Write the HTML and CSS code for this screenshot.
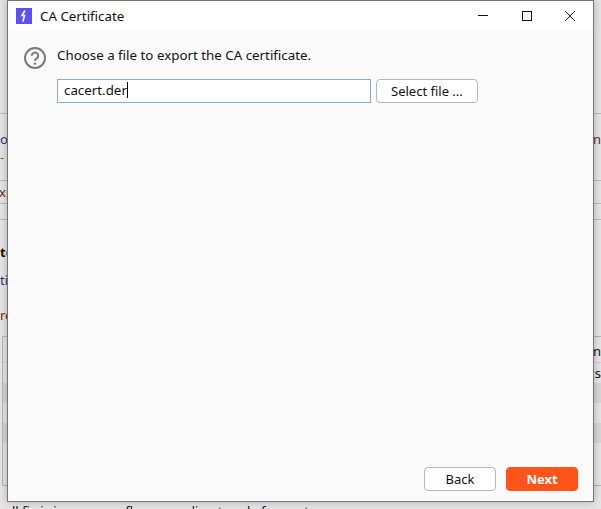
FILE: index.html
```html
<!DOCTYPE html>
<html lang="en">
<head>
<meta charset="UTF-8" />
<title>CA Certificate</title>
<link rel="stylesheet" href="styles.css">
</head>
<body>

<!-- page behind the dialog, only its edges show -->
<div class="behind" aria-hidden="true">
  <div class="row h-113 line"></div>
  <div class="row h-67 line">
    <div class="frag link">o<br><span class="orange">- a</span></div>
    <div class="frag"><span class="brown">on</span></div>
  </div>
  <div class="row h-23 line"><div class="frag brown xp">xp</div></div>
  <div class="row h-16 line"></div>
  <div class="row h-116">
    <div class="frag frag-list">
      <b class="frag-te">te</b>
      <span class="link frag-ti">ti</span>
      <span class="brown frag-re">re</span>
    </div>
  </div>
  <div class="table">
    <div class="table-head"><span></span><span class="frag">n</span></div>
    <div class="table-row"><span></span><span class="frag">cs</span></div>
    <div class="table-row shade"></div>
    <div class="table-row"></div>
    <div class="table-row shade"></div>
  </div>
  <div class="foot">ll fix is in progress flow according to rule for next</div>
</div>

<div class="dialog" role="dialog" aria-label="CA Certificate">
  <div class="titlebar">
    <svg class="app-icon" width="16" height="16" viewBox="0 0 16 16">
      <rect width="16" height="16" fill="#5b50f5"/>
      <path d="M9 2.5 6 7.5h2.5L7 13l-.2-.1" fill="none" stroke="#fff" stroke-width="1.6"/>
    </svg>
    <span class="title">CA Certificate</span>
    <div class="win-buttons">
      <svg width="48" height="30" viewBox="0 0 48 30"><path d="M19 14.5h10" stroke="#111"/></svg>
      <svg width="40" height="30" viewBox="0 0 40 30"><rect x="15.5" y="10.5" width="9" height="9" fill="none" stroke="#111"/></svg>
      <svg width="46" height="30" viewBox="0 0 46 30"><path d="M18 10l10 10M28 10 18 20" stroke="#222" fill="none"/></svg>
    </div>
  </div>

  <div class="content">
    <div class="question">
      <svg class="help-icon" width="22" height="22" viewBox="0 0 22 22">
        <circle cx="11" cy="11" r="10" fill="none" stroke="#7a7a7a" stroke-width="2"/>
        <path d="M7.8 8.8a3.2 3.2 0 1 1 4.9 2.6c-1.1.7-1.7 1.2-1.7 2.5" fill="none" stroke="#7a7a7a" stroke-width="2"/>
        <circle cx="11" cy="16.6" r="1.2" fill="#7a7a7a"/>
      </svg>
      <span class="question-text">Choose a file to export the CA certificate.</span>
    </div>
    <div class="file-row">
      <div class="file-input">cacert.der<i class="caret"></i></div>
      <button class="btn" type="button">Select file ...</button>
    </div>
  </div>

  <div class="actions">
    <button class="btn btn-wide" type="button">Back</button>
    <button class="btn btn-wide btn-next" type="button">Next</button>
  </div>
</div>

</body>
</html>
```

FILE: styles.css
```css
html, body {
  margin: 0;
  height: 100%;
}
body {
  width: 601px;
  height: 509px;
  overflow: hidden;
  position: relative;
  font-family: "Noto Sans", "Open Sans", sans-serif;
  font-size: 13.33px;
  color: #111;
  background: #e4e4e4;
}

/* PAGE BEHIND */
.behind {
  height: 509px;
  overflow: hidden;
  font-size: 13px;
  line-height: 18px;
}
.row {
  display: flex;
  justify-content: space-between;
  box-sizing: border-box;
}
.line { border-bottom: 1px solid #b9b9b9; }
.h-113 { height: 114px; }
.h-67 { height: 67px; padding-top: 16px; }
.h-23 { height: 23px; padding-top: 2px; }
.h-16 { height: 16px; }
.h-116 { height: 116px; padding-top: 23px; }
.xp { margin-left: -1px; }
.frag-list {
  display: flex;
  flex-direction: column;
}
.frag-ti { margin-top: 10px; }
.frag-re { margin-top: 17px; }
.link { color: #123a7a; }
.brown { color: #6b2a10; }
.orange { color: #a05a10; }
.table {
  height: 150px;
  box-sizing: border-box;
  margin-left: 2px;
  border: 1px solid #b4b4b4;
  border-right: none;
}
.table-head {
  display: flex;
  justify-content: space-between;
  height: 26px;
  box-sizing: border-box;
  line-height: 28px;
  border-bottom: 1px solid #cfcfcf;
}
.table-row {
  display: flex;
  justify-content: space-between;
  height: 20px;
  line-height: 20px;
}
.shade { background: #d6d6d6; }
.foot {
  margin: 16px 0 0 12px;
  white-space: nowrap;
}

/* DIALOG */
.dialog {
  position: absolute;
  top: 0;
  left: 7px;
  width: 587px;
  height: 502px;
  box-sizing: border-box;
  border: 1px solid #767676;
  display: flex;
  flex-direction: column;
  background: #fafafa;
  box-shadow: 0 0 7px rgb(0 0 0 / 0.25);
}
.titlebar {
  height: 30px;
  display: flex;
  align-items: center;
  background: #fff;
  flex-shrink: 0;
}
.app-icon {
  margin-left: 8px;
  flex-shrink: 0;
}
.title { margin-left: 8px; }
.win-buttons {
  margin-left: auto;
  display: flex;
}
.win-buttons svg { display: block; }

.content {
  flex: 1;
  padding: 16px 0 0 16px;
}
.question {
  display: flex;
  align-items: flex-start;
  gap: 11px;
}
.help-icon { flex-shrink: 0; }
.question-text {
  margin-top: -1px;
  line-height: 18px;
}
.file-row {
  display: flex;
  align-items: center;
  gap: 5px;
  margin: 10px 0 0 33px;
}
.file-input {
  width: 314px;
  height: 24px;
  box-sizing: border-box;
  border: 1px solid #7fb0e0;
  background: #fff;
  padding-left: 6px;
  line-height: 21px;
}
.caret {
  display: inline-block;
  width: 1px;
  height: 16px;
  background: #000;
  vertical-align: -3px;
}
.btn {
  height: 24px;
  padding: 0 14px;
  border: 1px solid #b8b8b8;
  border-radius: 4px;
  background: #fff;
  color: #111;
  font-family: inherit;
  font-size: 13px;
}
.actions {
  display: flex;
  justify-content: flex-end;
  gap: 10px;
  padding: 0 15px 10px 0;
}
.btn-wide { width: 72px; }
.btn-next {
  background: #ff5419;
  border-color: #ff5419;
  color: #fff;
  font-weight: 700;
}
```
